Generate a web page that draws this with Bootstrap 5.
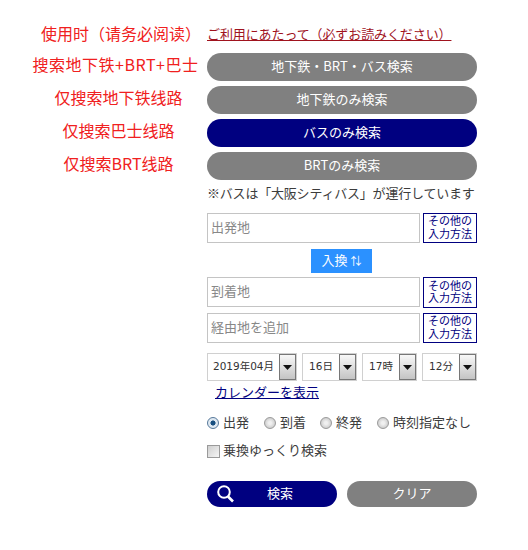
<!DOCTYPE html>
<html lang="ja">
<head>
<meta charset="utf-8">
<title>検索</title>
<link href="https://cdn.jsdelivr.net/npm/bootstrap@5.3.0/dist/css/bootstrap.min.css" rel="stylesheet">
<style>
body{background:#fff;color:#3c3c3c;font-family:"Noto Sans CJK JP","Liberation Sans",sans-serif;font-size:13px;line-height:1.2;}
.page-wrap{width:528px;padding-top:23px;}
.side-col{width:207px;padding:0 0 6px 30px;flex:none;text-align:center;color:#f02020;font-size:16px;font-family:"Noto Sans CJK SC","Noto Sans CJK JP",sans-serif;line-height:20px;}
.side-first{padding:0 0 2px 35px;}
.side-wide{padding-left:24px;letter-spacing:.5px;white-space:nowrap;}
.main-col{width:270px;flex:none;}
.rule-link{color:#a0131e;font-size:13px;line-height:20px;letter-spacing:-.1px;}
.pill{display:block;width:100%;height:28px;padding:0 0 2px;border:0;border-radius:14px;background:#808080;color:#fff;font-size:13px;line-height:26px;text-align:center;}
.pill-on{background:#000080;}
.gap-pill{margin-top:5px;}
.gap-first{margin-top:8px;}
.note{font-size:13px;line-height:20px;margin:3px 0 0;white-space:nowrap;letter-spacing:-.2px;}
.place{width:213px;height:30px;flex:none;border:1px solid #c4c4c4;border-radius:0;padding:0 3px 3px;font-size:13px;box-shadow:none;}
.place::placeholder{color:#888;opacity:1;}
.other{width:54px;height:30px;flex:none;padding:0 0 3px;border:1px solid #000080;border-radius:0;background:#fff;color:#000080;font-size:11px;line-height:12.5px;text-align:center;}
.other-tall{height:31px;}
.swap-row{margin:6px 0 4px 104px;}
.swap{width:61px;height:24px;padding:0 0 2px;border:0;border-radius:0;background:#2b91ff;color:#fff;font-size:13px;line-height:22px;}
.swap-ico{font-size:11px;}
.row-first{margin-top:10px;}
.row-via{margin-top:5px;}
.row-pick{margin-top:10px;}
.pick{height:28px;border:1px solid #d0d0d0;background:#fff;align-items:stretch;flex:none;}
.pick select{appearance:none;border:0;background:transparent;padding:0 0 2px;margin:0;flex:1;min-width:0;text-align:center;font-size:10.500px;color:#333;font-family:"DejaVu Sans","Noto Sans CJK JP",sans-serif;}
.pick-a{width:90px;}
.pick-b{width:55px;}
.arrow{width:17px;flex:none;border:1px solid #777;background:linear-gradient(#f8f8f8,#c4c4c4);display:flex;align-items:center;justify-content:center;}
.arrow svg{display:block;}
.cal-row{margin-top:1px;}
.cal-link{color:#000080;font-size:13px;line-height:20px;margin-left:8px;}
.opt{font-size:13px;line-height:20px;}
.opt-radios{margin-top:10px;}
.opt-check{margin-top:8px;}
.w-a{width:57px;}
.w-b{width:56px;}
.opt input{appearance:none;width:12px;height:12px;margin:2px 4px 0 0;border:1px solid #9a9a9a;background:radial-gradient(circle,#f0f0f0 20%,#c6c6c6 85%);border-radius:50%;flex:none;}
.opt input:checked{background:radial-gradient(circle,#174f80 0 32%,#dfe9f2 40% 100%);border-color:#56789a;}
.opt input[type=checkbox]{width:13px;height:13px;margin-right:3px;border-radius:0;background:linear-gradient(135deg,#cfcfcf,#f5f5f5);}
.row-act{margin-top:21px;}
.act{width:130px;height:26px;padding:0 0 2px;border:0;border-radius:13px;color:#fff;font-size:13px;line-height:24px;background:#000080;}
.act-go{padding-left:16px;}
.act-gray{background:#808080;}
.act-ico{left:8px;top:3px;}
</style>
</head>
<body>
<div class="page-wrap">
  <div class="d-flex align-items-center">
    <div class="side-col side-first">使用时（请务必阅读）</div>
    <div class="main-col"><a href="#" class="rule-link">ご利用にあたって（必ずお読みください）</a></div>
  </div>
  <div class="d-flex align-items-center gap-first">
    <div class="side-col side-wide">搜索地下铁+BRT+巴士</div>
    <div class="main-col"><button type="button" class="pill">地下鉄・BRT・バス検索</button></div>
  </div>
  <div class="d-flex align-items-center gap-pill">
    <div class="side-col">仅搜索地下铁线路</div>
    <div class="main-col"><button type="button" class="pill">地下鉄のみ検索</button></div>
  </div>
  <div class="d-flex align-items-center gap-pill">
    <div class="side-col">仅搜索巴士线路</div>
    <div class="main-col"><button type="button" class="pill pill-on">バスのみ検索</button></div>
  </div>
  <div class="d-flex align-items-center gap-pill">
    <div class="side-col">仅搜索BRT线路</div>
    <div class="main-col"><button type="button" class="pill">BRTのみ検索</button></div>
  </div>
  <div class="d-flex">
    <div class="side-col"></div>
    <div class="main-col">
      <p class="note">※バスは「大阪シティバス」が運行しています</p>
      <div class="d-flex justify-content-between row-first">
        <input class="form-control place" placeholder="出発地">
        <button type="button" class="other">その他の<br>入力方法</button>
      </div>
      <div class="d-flex swap-row"><button type="button" class="swap">入換 <span class="swap-ico">⇅</span></button></div>
      <div class="d-flex justify-content-between align-items-start">
        <input class="form-control place" placeholder="到着地">
        <button type="button" class="other other-tall">その他の<br>入力方法</button>
      </div>
      <div class="d-flex justify-content-between row-via">
        <input class="form-control place" placeholder="経由地を追加">
        <button type="button" class="other">その他の<br>入力方法</button>
      </div>
      <div class="d-flex justify-content-between row-pick">
        <div class="pick pick-a d-flex"><select><option>2019年04月</option></select><span class="arrow"><svg width="9" height="5"><path d="M0 0h9L4.500 5z" fill="#111"/></svg></span></div>
        <div class="pick pick-b d-flex"><select><option>16日</option></select><span class="arrow"><svg width="9" height="5"><path d="M0 0h9L4.500 5z" fill="#111"/></svg></span></div>
        <div class="pick pick-b d-flex"><select><option>17時</option></select><span class="arrow"><svg width="9" height="5"><path d="M0 0h9L4.500 5z" fill="#111"/></svg></span></div>
        <div class="pick pick-b d-flex"><select><option>12分</option></select><span class="arrow"><svg width="9" height="5"><path d="M0 0h9L4.500 5z" fill="#111"/></svg></span></div>
      </div>
      <div class="cal-row"><a href="#" class="cal-link">カレンダーを表示</a></div>
      <div class="d-flex opt opt-radios">
        <label class="d-flex align-items-center w-a"><input type="radio" name="t" checked>出発</label>
        <label class="d-flex align-items-center w-b"><input type="radio" name="t">到着</label>
        <label class="d-flex align-items-center w-a"><input type="radio" name="t">終発</label>
        <label class="d-flex align-items-center"><input type="radio" name="t">時刻指定なし</label>
      </div>
      <div class="opt opt-check">
        <label class="d-flex align-items-center"><input type="checkbox">乗換ゆっくり検索</label>
      </div>
      <div class="d-flex justify-content-between row-act">
        <button type="button" class="act act-go position-relative">
          <svg class="act-ico position-absolute" width="21" height="20" viewBox="0 0 21 20" fill="none" stroke="#fff"><circle cx="9" cy="8" r="5.800" stroke-width="2"/><path d="M13 12.500l5 5" stroke-width="2.600"/></svg>検索</button>
        <button type="button" class="act act-gray">クリア</button>
      </div>
    </div>
  </div>
</div>
<script src="https://cdn.jsdelivr.net/npm/bootstrap@5.3.0/dist/js/bootstrap.bundle.min.js"></script>
</body>
</html>
